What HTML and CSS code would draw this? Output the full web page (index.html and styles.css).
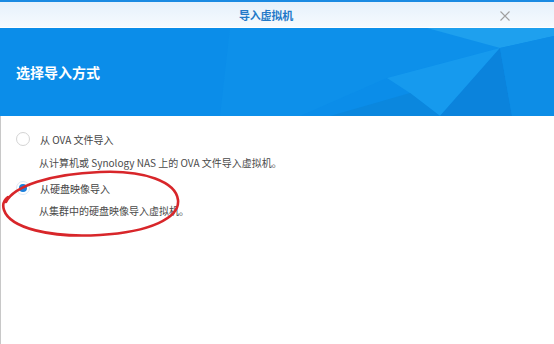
FILE: index.html
```html
<!DOCTYPE html>
<html lang="zh-CN">
<head>
<meta charset="utf-8">
<title>导入虚拟机</title>
<link rel="stylesheet" href="styles.css">
</head>
<body>
<div class="window">
  <div class="topline"></div>
  <div class="titlebar">
    <span class="title">导入虚拟机</span>
    <svg class="close" width="10" height="10" viewBox="0 0 10 10"><path d="M0.5 0.5 L9.5 9.5 M9.5 0.5 L0.5 9.5" stroke="#a0a0a0" stroke-width="1.1" fill="none"/></svg>
  </div>
  <div class="banner">
    <svg class="banner-bg" viewBox="0 0 554 88" preserveAspectRatio="none">
      <rect x="0" y="0" width="554" height="88" fill="#0b8de9"/>
      <polygon points="230,0 430,0 500,20 387,50 300,88 220,88" fill="#0d90ea"/>
      <polygon points="427,0 554,0 554,8 500,20" fill="#1ea0ee"/>
      <polygon points="387,50 500,20 440,88 410,65" fill="#169aee"/>
      <polygon points="330,88 410,65 440,88" fill="#0b87de"/>
      <polygon points="500,20 440,88 512,88" fill="#0b83dc"/>
      <polygon points="500,20 554,8 554,88 512,88" fill="#0d8de6"/>
    </svg>
    <h1 class="banner-title">选择导入方式</h1>
  </div>
  <div class="content">
    <label class="option option-first">
      <span class="radio"></span>
      <span class="label">从 OVA 文件导入</span>
    </label>
    <div class="desc desc-first">从计算机或 Synology NAS 上的 OVA 文件导入虚拟机。</div>
    <label class="option option-second">
      <span class="radio radio-checked"></span>
      <span class="label">从硬盘映像导入</span>
    </label>
    <div class="desc desc-second">从集群中的硬盘映像导入虚拟机。</div>
  </div>
  <svg class="annotation" width="554" height="344" viewBox="0 0 554 344">
    <path d="M6 202 C 14 186, 50 174, 100 172 C 145 170, 176 182, 178 200 C 180 218, 150 232, 100 235 C 50 238, 10 228, 4 210 C 2 204, 4 200, 8 197" fill="none" stroke="#d8262a" stroke-width="2.6" stroke-linecap="round"/>
  </svg>
</div>
</body>
</html>
```
FILE: styles.css
```css
html, body {
  margin: 0;
  padding: 0;
  background: #ffffff;
}
body {
  font-family: "Noto Sans CJK SC", "Noto Sans", sans-serif;
}
.window {
  position: relative;
  width: 554px;
  height: 344px;
  overflow: hidden;
  background: #ffffff;
}
.topline {
  height: 2px;
  background: #1a8ae2;
}
.titlebar {
  height: 25px;
  border-bottom: 1px solid #ffffff;
  background: linear-gradient(#e6f1fb, #f6fafe);
  display: flex;
  align-items: center;
  justify-content: center;
  position: relative;
  padding-right: 22px;
}
.title {
  font-size: 11px;
  font-weight: bold;
  color: #2379c8;
  letter-spacing: -0.2px;
}
.close {
  position: absolute;
  right: 44px;
  top: 9px;
}
.banner {
  position: relative;
  height: 88px;
  display: flex;
  align-items: center;
  padding-left: 16px;
  overflow: hidden;
}
.banner-bg {
  position: absolute;
  left: 0;
  top: 0;
  width: 100%;
  height: 100%;
}
.banner-title {
  position: relative;
  margin: 0;
  font-size: 14px;
  font-weight: bold;
  color: #ffffff;
}
.content {
  height: 228px;
  border-left: 1px solid #c8c8c8;
  padding-left: 15px;
  padding-top: 13px;
  display: flex;
  flex-direction: column;
  align-items: flex-start;
}
.option {
  display: flex;
  align-items: center;
  height: 20px;
  gap: 10px;
}
.option-second {
  margin-top: 5px;
}
.radio {
  width: 12px;
  height: 12px;
  border: 1px solid #d4d4d4;
  border-radius: 50%;
  background: #ffffff;
  display: flex;
  align-items: center;
  justify-content: center;
}
.radio-checked {
  border-color: #dde9f5;
}
.radio-checked::after {
  content: "";
  width: 8px;
  height: 8px;
  border-radius: 50%;
  background: #1b80dc;
}
.label {
  font-size: 10px;
  color: #444444;
}
.desc {
  margin-left: 23px;
  height: 20px;
  line-height: 20px;
  font-size: 10px;
  color: #4a4a4a;
}
.desc-first {
  margin-top: 4px;
}
.desc-second {
  margin-top: 3px;
}
.annotation {
  position: absolute;
  left: 0;
  top: 0;
  pointer-events: none;
}
```
